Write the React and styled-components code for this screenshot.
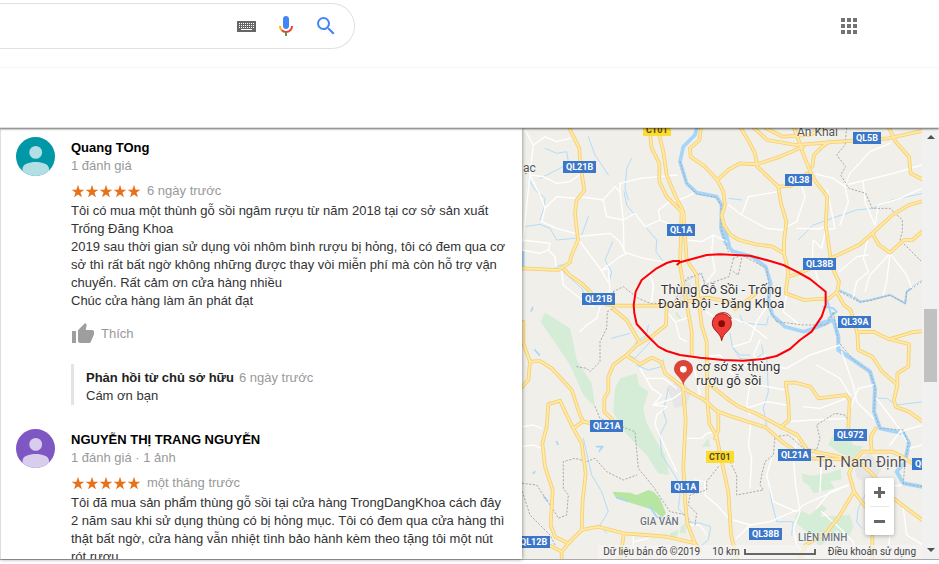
import React from "react";
import styled, { createGlobalStyle } from "styled-components";

const user = {
  teal: { back: "#0097a7", front: "#b2dfe4" },
  purple: { back: "#7e57c2", front: "#d8cdec" },
};

const reviews = [
  {
    name: "Quang TOng",
    info: "1 đánh giá",
    time: "6 ngày trước",
    avatar: user.teal,
    text: [
      "Tôi có mua một thùnh gỗ sồi ngâm rượu từ năm 2018 tại cơ sở sản xuất Trống Đăng Khoa",
      "2019 sau thời gian sử dụng vòi nhôm bình rượu bị hỏng, tôi có đem qua cơ sở thì rất bất ngờ không những được thay vòi miễn phí mà còn hỗ trợ vận chuyển. Rất cảm ơn cửa hàng nhiều",
      "Chúc cửa hàng làm ăn phát đạt",
    ],
    reply: { time: "6 ngày trước", text: "Cám ơn bạn" },
  },
  {
    name: "NGUYỄN THỊ TRANG NGUYỄN",
    info: "1 đánh giá · 1 ảnh",
    time: "một tháng trước",
    avatar: user.purple,
    text: [
      "Tôi đã mua sản phẩm thùng gỗ sồi tại cửa hàng TrongDangKhoa cách đây 2 năm sau khi sử dụng thùng có bị hỏng mục. Tôi có đem qua cửa hàng thì thật bất ngờ, cửa hàng vẫn nhiệt tình bảo hành kèm theo tặng tôi một nút rót rượu",
    ],
  },
];

const shields = [
  { text: "CT01", x: 121, y: -4, toll: true },
  { text: "QL5B", x: 331, y: 4 },
  { text: "QL21B", x: 41, y: 33 },
  { text: "QL38", x: 263, y: 46 },
  { text: "QL1A", x: 145, y: 96 },
  { text: "QL38B", x: 281, y: 130 },
  { text: "QL21B", x: 60, y: 165 },
  { text: "QL39A", x: 316, y: 188 },
  { text: "QL21A", x: 68, y: 292 },
  { text: "QL972", x: 312, y: 301 },
  { text: "QL21A", x: 256, y: 321 },
  { text: "CT01", x: 184, y: 323, toll: true },
  { text: "QL1A", x: 149, y: 353 },
  { text: "QL12B", x: -5, y: 408 },
  { text: "QL38B", x: 227, y: 400 },
  { text: "QL10", x: 390, y: 330 },
];

const roads = [
  "M7 430L115 435L150 412L153 395L174 345L165 265L170 225L193 197L180 110L178 70L148 9",
  "M132 432L148 450L185 475L210 500L225 520L262 540L300 542L420 542L500 530L560 518L630 530",
  "M280 552L320 585L340 620L360 655",
  "M388 9L395 70L418 115L418 170L440 215L485 260L483 330L480 420L490 480L515 620L515 690",
  "M413 9L430 80L440 150L465 210L490 260L495 330L500 405L530 450L535 520L545 600L560 650L562 830L568 895L590 935L600 985L625 1100L633 1230L650 1300",
  "M488 780L497 885L490 1025L495 1125L502 1195L525 1255",
  "M543 9L538 45L510 70L512 95L555 125L592 165L610 200L615 240L605 270L612 300L630 328L657 345L707 358L757 365L792 385",
  "M592 165L627 133L660 115L710 118L780 95L850 65",
  "M662 9L687 50L705 85L712 125L775 185L782 230L799 290L792 350L792 385L805 440L797 505L852 525L927 520L952 500L957 470L942 440L932 400L917 300L922 215L887 170L867 130L847 80L832 35L822 9",
  "M702 9L742 45L827 60L957 50L1107 40L1205 18",
  "M737 9L787 35L867 30L917 9",
  "M1107 9L1127 50L1167 95L1172 145L1209 164",
  "M775 185L812 183L862 145",
  "M877 125L882 90L907 65L927 50",
  "M1209 228L1167 240L1117 270L1057 325L1017 360L937 398L850 440L805 455",
  "M1057 325L1077 360L1110 383L1152 345L1177 345L1209 318",
  "M952 505L972 540L992 555L1012 625L1015 675L1057 695L1087 740L1132 780L1122 825L1127 845L1167 860L1209 890",
  "M1012 622L1060 620L1107 643L1177 622L1209 618",
  "M1117 645L1167 657L1165 725L1132 745L1132 785",
  "M565 775L627 825L657 845L707 865L782 905L832 930L862 975L957 995L1017 1010",
  "M488 790L550 823L590 858L630 873L737 907L792 955L857 1000L970 1003",
  "M595 860L595 915L585 940",
  "M782 907L807 885L805 830L797 773L827 773L872 785L895 820L977 810L989 825L985 910",
  "M1067 910L1052 935L1055 980",
  "M970 1003L1005 1005L1027 980L1117 980L1147 995L1177 1015",
  "M1002 1010L987 1045L1002 1100L1040 1150",
  "M1002 1100L957 1175L917 1225L857 1260L837 1302",
  "M1017 1010L1055 1045L1107 1110L1209 1187",
  "M1057 1235L1057 1302",
  "M10 590L10 655L30 710L25 765L7 785",
  "M30 710L60 708L95 730L155 795L180 870L190 890L215 895",
  "M190 888L160 910L140 870L120 827L85 838L80 905L67 955L75 1025L98 1095L92 1200L105 1235L145 1255L185 1215L188 1125L197 1045L185 955L160 910",
  "M90 1262L125 1280L150 1250M125 1280L125 1302",
  "M185 1215L235 1205L310 1225L440 1235L525 1255L540 1275M312 1225L300 1302",
  "M440 550L438 600L395 635L350 660L320 690L280 720L265 755L265 800L253 820L253 860L278 885",
  "M320 692L360 718L395 698L425 712L435 745L488 785",
  "M645 552L690 520L707 505",
];

const lanes = [
  "M15 15L40 60L30 150L20 240L12 320L7 350",
  "M30 150L70 155L110 175L150 170L178 150M30 150L60 210L75 250L65 290L110 310L165 325",
  "M40 60L75 35L110 50L150 40M75 250L110 215L170 220",
  "M178 215L250 225L260 275L310 285L300 200L285 185L250 225M300 200L300 175L360 160L418 155L470 150",
  "M174 335L270 325L300 350L315 382L370 400L440 412M310 285L312 380",
  "M310 285L345 265L375 305L420 285L455 300L483 310M420 285L415 255L450 230L490 220L520 205",
  "M7 345L90 355L85 375L105 395L108 425M7 375L60 385L85 375M180 350L240 430L270 480L265 535",
  "M125 440L130 480L180 520L220 545M245 435L300 395L320 385M268 470L265 430L245 435",
  "M240 545L230 580L200 600L180 620M385 435L400 480L395 535",
  "M500 345L545 350L580 330L620 350M580 330L575 380L585 440L560 470",
  "M440 560L465 590L480 640L500 650M470 590L510 575M560 560L600 590L640 580L690 600L740 640",
  "M627 240L665 270L740 310L790 315M665 270L685 215L775 200M880 145L940 160L975 185",
  "M790 310L830 290L855 215L840 165M830 310L900 312L920 300L905 370L880 345L877 400L900 490",
  "M922 195L945 310L917 315M977 180L1120 145L1205 120M975 180L990 145L1050 80L1110 55",
  "M975 185L985 230L960 300M1030 170L1035 230L1065 300L1075 240L1140 220L1205 190",
  "M1045 335L1030 400L1045 440L1010 470L1000 515M1110 385L1160 450L1175 490L1205 470",
  "M1110 385L1100 470L1090 510M1110 385L1050 450L1035 500M957 440L1010 395L1045 390",
  "M740 545L710 590L690 650L640 665M800 510L790 560L840 600",
  "M510 700L600 690L620 715L690 720L740 690M627 740L690 775L680 840L690 870",
  "M680 850L740 830L800 840M690 775L795 795M720 645L700 690L730 720L800 730L870 690L960 660",
  "M965 680L1000 780L1010 830L1060 880M890 720L960 760L990 810M800 890L880 885L985 880",
  "M850 845L900 850L980 820M832 930L820 1000L827 1080L840 1160",
  "M360 730L395 790L425 810L400 840L440 845L410 870L405 900L470 1040",
  "M380 760L430 760L470 790M400 840L460 820L488 800M500 700L525 740L540 810L500 800",
  "M500 940L545 940L560 925L590 920M7 905L40 900L65 910M7 965L40 960L65 970M525 1065L555 1070L555 1110L590 1140L627 1180",
  "M692 900L685 960L695 1000L690 1090M755 1000L740 1050L760 1130L830 1160L850 1140L985 1080",
  "M640 1185L690 1200L750 1190L830 1155M690 1200L650 1240M840 1160L820 1210L830 1260L870 1302",
  "M985 1080L930 1100L890 1150M900 1100L905 1000M905 1160L960 1210L1000 1250L1020 1302",
  "M500 1200L540 1200L560 1230M340 1235L340 1302M345 1250L385 1240",
  "M1060 780L1015 790L980 880M1070 820L1130 900L1160 950M1145 1080L1110 1085M1110 960L1140 920L1209 900",
  "M1110 1110L1090 1165L1110 1230L1100 1302M1150 1150L1160 1230L1209 1260",
  "M1205 960L1170 970M1040 1080L1070 1120L1120 1120",
];

const streams = [
  "M28 165L45 195L75 220L72 250L60 285M75 70L110 85L140 80L145 110L120 130L60 160",
  "M12 305L60 298L90 310L110 345L165 340M145 420L120 420L90 440M130 440L185 490L200 520",
  "M312 200L320 240L345 270M335 100L320 130L315 190L325 225M225 90L265 150M205 35L225 90M185 330L205 275",
  "M380 310L410 345L408 380L430 410M278 350L255 405L275 440L268 470",
  "M495 470L540 445L555 470L540 500L490 510M345 655L380 630L385 600",
  "M190 940L215 1050L245 1100L265 1160L240 1200L260 1225",
  "M445 790L430 860L440 890L420 930L425 990L470 1060L480 1110L475 1150L500 1180",
  "M500 1190L540 1195L572 1205L565 1245L540 1265L520 1250",
  "M627 220L665 225M835 345L880 300L950 275L1010 255L1060 250L1115 225L1209 205",
  "M630 625L637 665L660 690L690 690M660 570L670 595L740 600L745 575M740 690L745 800L730 850L740 900",
  "M640 670L660 700L700 705L730 685L725 660M1067 820L1100 820L1130 840L1209 830",
  "M750 1095L755 1130L770 1190L820 1190L815 1230M1067 1080L1040 1100L1015 1150L1010 1190L1025 1210",
  "M325 690L345 700L400 640M275 640L330 625M352 722L385 735L425 725L430 705",
];

const borders = [
  "M480 110L500 175L530 207L590 217L603 240L603 310L625 380",
  "M980 9L975 60L950 90L977 125L962 150L987 190L1037 205L1057 250L1110 250L1147 285L1147 320L1140 345L1205 410",
  "M280 500L310 485L355 520L390 535L460 535L500 460L545 445L555 480L627 455L640 400",
  "M280 500L280 550L262 560L260 610L240 650L240 710L210 740L200 730L170 725",
  "M640 400L665 390L740 430L750 500L740 540L770 590M665 400L655 450L640 440",
  "M770 590L850 600L920 600L940 560L955 650L1000 705L1050 740L1065 790L1062 860L1080 910L1150 915L1165 955L1155 1010L1150 1075L1205 1085",
  "M225 845L240 880L345 920L355 1030L400 1085L450 1160L500 1170L510 1190",
  "M7 1075L50 1080L110 1170L115 1180L140 1170L145 1110L130 1090L130 1010L165 1000L200 1010L225 1000L260 1040L310 1065L350 1050",
  "M7 1100L30 1170L90 1230L105 1260M595 1025L560 1070L560 1095L510 1110L505 1140L530 1165L525 1200",
  "M980 880L975 870L945 865L890 900L900 940L890 975L850 970L805 930L765 935L760 990L735 1010L725 1050L720 1080L730 1095L650 1110L650 1050L630 1010",
  "M922 520L960 500L1020 532L1050 527L1110 510L1157 535L1160 500L1205 470",
];

const greens = [
  "M62 590L75 563L100 578L150 610L158 645L170 705L215 775L225 845L190 810L150 720L110 660Z",
  "M285 790L300 760L350 745L357 780L385 800L370 850L378 890L410 950L435 990L447 1050L415 1045L380 990L350 960L300 905L280 860Z",
  "M845 1045L870 1052L925 1045L962 1032L965 1062L930 1070L945 1090L880 1105L870 1085L850 1070Z",
  "M827 1170L840 1155L870 1170L905 1138L920 1150L900 1175L990 1170L1000 1205L985 1240L950 1215L900 1265L870 1230L825 1190Z",
  "M925 960L945 920L985 935L1000 960L1030 965L1000 1000L960 985Z",
  "M470 560L487 585L475 580L465 565ZM545 965L565 940L572 965ZM482 1205L497 1195L497 1225L480 1225ZM450 1225L475 1215L470 1240L450 1240Z",
];

const Star = () => (
  <svg width="14" height="14" viewBox="1 1 22 22" aria-hidden="true">
    <path
      fill="#e7711b"
      d="M12 17.6L18.2 22L15.9 14.5L22 10H14.5L12 2L9.5 10H2L8.1 14.5L5.8 22Z"
    />
  </svg>
);

const AvatarIcon = ({ colors }) => (
  <Avatar viewBox="0 0 39 39" role="img" aria-label="Avatar">
    <defs>
      <clipPath id={"clip" + colors.back.slice(1)}>
        <circle cx="19.5" cy="19.5" r="19.5" />
      </clipPath>
    </defs>
    <g clipPath={`url(#clip${colors.back.slice(1)})`}>
      <rect width="39" height="39" fill={colors.back} />
      <circle cx="19.7" cy="15.4" r="6.4" fill={colors.front} />
      <path
        fill={colors.front}
        d="M6.5 32C6.5 27 13 25 19.7 25S33 27 33 32V40H6.5Z"
      />
    </g>
  </Avatar>
);

const Review = ({ data }) => (
  <ReviewRow>
    <AvatarIcon colors={data.avatar} />
    <ReviewBody>
      <Name>{data.name}</Name>
      <Muted>{data.info}</Muted>
      <Rating>
        <Stars role="img" aria-label="5/5">
          {[1, 2, 3, 4, 5].map((n) => (
            <Star key={n} />
          ))}
        </Stars>
        <Muted>{data.time}</Muted>
      </Rating>
      {data.text.map((line) => (
        <Paragraph key={line}>{line}</Paragraph>
      ))}
      <LikeButton type="button">
        <svg width="24" height="24" viewBox="0 0 24 24" aria-hidden="true">
          <path
            fill="#9e9e9e"
            d="M1 21h4V9H1v12zm22-11c0-1.1-.9-2-2-2h-6.31l.95-4.57.03-.32c0-.41-.17-.79-.44-1.06L14.17 1 7.59 7.59C7.22 7.95 7 8.45 7 9v10c0 1.1.9 2 2 2h9c.83 0 1.54-.5 1.84-1.22l3.02-7.05c.09-.23.14-.47.14-.73v-2z"
          />
        </svg>
        Thích
      </LikeButton>
      {data.reply && (
        <Reply>
          <ReplyHead>
            <b>Phản hồi từ chủ sở hữu</b>
            <Muted>{data.reply.time}</Muted>
          </ReplyHead>
          <Paragraph>{data.reply.text}</Paragraph>
        </Reply>
      )}
    </ReviewBody>
  </ReviewRow>
);

// drawn on a grid three times finer than the page
const MapDrawing = () => (
  <MapSvg viewBox="6 9 1203 1293" preserveAspectRatio="xMinYMin slice">
    <g fill="#d5ecd7">
      {greens.map((d) => (
        <path key={d} d={d} />
      ))}
    </g>
    <path
      fill="#b7e6a3"
      d="M278 1100L330 1103L350 1110L385 1095L400 1100L420 1120L438 1165L425 1178L400 1155L370 1145L320 1130L285 1115Z"
    />
    <path
      fill="#e6e6e6"
      d="M440 785L470 772L500 780L515 800L500 840L465 850ZM1000 1010L1050 985L1085 1030L1060 1080L1010 1060ZM470 480L510 470L520 520L480 530Z"
    />
    <g fill="none" strokeLinejoin="round" strokeLinecap="round">
      <g stroke="#b3dcfa" strokeWidth="3">
        {streams.map((d) => (
          <path key={d} d={d} />
        ))}
      </g>
      <g stroke="#a6d5fa">
        <path
          strokeWidth="11"
          d="M530 9L525 30L490 65L480 110L500 175L530 203L590 215L605 240L603 310L615 350L637 378L697 395L737 425L752 475L745 525L757 570L795 605L852 620L900 603L937 585"
        />
        <path
          strokeWidth="12"
          d="M900 595L940 585L955 635L955 675L1000 705L1050 740L1065 790L1062 860L1080 910L1150 925L1167 955L1155 1010L1130 1040L1150 1075L1209 1086"
        />
        <path
          strokeWidth="6"
          d="M922 520L960 497L1000 515L1020 530L1050 525L1110 510L1155 535L1160 500L1205 468M922 525L937 585M910 545L940 550L950 560L925 580"
        />
        <path strokeWidth="12" d="M607 290L627 360M7 380L7 425" />
        <path
          strokeWidth="5"
          d="M38 548L34 558M45 675L58 690M110 950L114 958M230 965L248 965L238 978M40 1045L44 1040M72 1115L82 1128M290 1118L320 1128M390 1145L410 1175L430 1182"
        />
      </g>
      <g stroke="#fff" strokeWidth="4">
        {lanes.map((d) => (
          <path key={d} d={d} />
        ))}
      </g>
      <g stroke="#a9a9a9" strokeWidth="3" strokeDasharray="4 7">
        {borders.map((d) => (
          <path key={d} d={d} />
        ))}
      </g>
      <g stroke="#f5cf72" strokeWidth="11">
        {roads.map((d) => (
          <path key={d} d={d} />
        ))}
      </g>
      <g stroke="#ffe9a4" strokeWidth="6">
        {roads.map((d) => (
          <path key={d} d={d} />
        ))}
      </g>
    </g>
  </MapSvg>
);

const MapMarks = () => (
  <MapSvg viewBox="6 9 1203 1293" preserveAspectRatio="xMinYMin slice">
    <path
      fill="none"
      stroke="#fb0007"
      strokeWidth="6"
      strokeLinejoin="round"
      d="M470 420L480 412L530 398L560 390L600 388L690 392L750 408L790 420L830 440L870 462L895 482L917 500L917 540L905 575L875 620L840 645L810 672L770 693L730 702L670 707L610 705L540 698L480 690L440 678L415 665L380 630L350 597L343 565L341 540L347 500L365 465L410 430L440 414L460 408L480 408"
    />
    <path
      fill="#dc4437"
      d="M490 782C486 758 462 750 462 733C462 717 474 705 490 705S519 717 519 733C519 750 494 758 490 782Z"
    />
    <circle cx="490" cy="733" r="10" fill="#fff" />
    <path
      fill="#ef3c36"
      stroke="#a31616"
      strokeWidth="3"
      d="M605 647C602 622 577 617 577 595C577 578 590 566 606 566S634 578 634 596C634 617 609 622 605 647Z"
    />
    <path fill="none" stroke="#b3201c" strokeWidth="3" d="M585 574C598 558 630 558 634 582" />
    <circle cx="605" cy="596" r="10" fill="#8a0a0a" />
  </MapSvg>
);

function App() {
  return (
    <Page>
      <GlobalStyle />
      <Header>
        <TopBar>
          <SearchBox role="search">
            <SearchInput type="text" aria-label="Tìm kiếm" />
            <IconButton type="button" aria-label="Bàn phím">
              <svg width="19" height="11" viewBox="0 0 19 11">
                <rect width="19" height="11" fill="#666" />
                <path
                  stroke="#fff"
                  strokeDasharray="1 1"
                  d="M2 2.5H17M2 4.5H17M2 6.5H17"
                />
                <path stroke="#fff" d="M4 8.5H15" />
              </svg>
            </IconButton>
            <IconButton type="button" aria-label="Giọng nói">
              <svg width="24" height="24" viewBox="0 0 24 24">
                <path fill="#4285f4" d="M12 15c1.7 0 3-1.3 3-3V5c0-1.700-1.300-3-3-3S9 3.300 9 5v7c0 1.700 1.300 3 3 3z" />
                <path fill="#34a853" d="M11 18.900h2V22h-2z" />
                <path fill="#fbbc05" d="M7 12H5c0 1.900.8 3.700 2 5l1.400-1.400C7.600 14.700 7 13.400 7 12z" />
                <path fill="#ea4335" d="M12 17c-1.400 0-2.600-.6-3.500-1.500L7.100 17c1.200 1.200 3 2 4.900 2 3.900 0 7-3.100 7-7h-2c0 2.800-2.200 5-5 5z" />
              </svg>
            </IconButton>
            <IconButton type="submit" aria-label="Tìm">
              <svg width="24" height="24" viewBox="0 0 24 24">
                <path
                  fill="#4285f4"
                  d="M15.500 14h-.79l-.28-.27A6.470 6.470 0 0 0 16 9.500 6.500 6.500 0 1 0 9.500 16c1.610 0 3.090-.59 4.230-1.570l.27.28v.79l5 4.990L20.490 19l-4.990-5zm-6 0C7.010 14 5 11.990 5 9.500S7.010 5 9.500 5 14 7.010 14 9.500 11.990 14 9.500 14z"
                />
              </svg>
            </IconButton>
          </SearchBox>
          <IconButton type="button" aria-label="Ứng dụng">
            <svg width="16" height="16" viewBox="0 0 16 16" fill="#737373">
              <path d="M0 0h4v4H0zM6 0h4v4H6zM12 0h4v4h-4zM0 6h4v4H0zM6 6h4v4H6zM12 6h4v4h-4zM0 12h4v4H0zM6 12h4v4H6zM12 12h4v4h-4z" />
            </svg>
          </IconButton>
        </TopBar>
      </Header>
      <Content>
        <Reviews>
          {reviews.map((data) => (
            <Review key={data.name} data={data} />
          ))}
        </Reviews>
        <MapArea>
          <MapDrawing />
          {shields.map((s, index) => (
            <Shield key={index} $x={s.x} $y={s.y} $toll={s.toll}>
              {s.text}
            </Shield>
          ))}
          <Place $x={1} $y={32} $size={12}>ạc</Place>
          <Place $x={275} $y={-4} $size={12}>An Khái</Place>
          <Place $x={118} $y={386} $size={10} $area>GIA VÂN</Place>
          <Place $x={276} $y={402} $size={10} $area>LIÊN MINH</Place>
          <Place $x={294} $y={326} $size={15}>Tp. Nam Định</Place>
          <Place $x={136} $y={155} $size={13} $dark>
            Thùng Gỗ Sồi - Trống
            <br />
            Đoàn Đội - Đăng Khoa
          </Place>
          <Place $x={174} $y={232} $size={13} $dark $left>
            cơ sở sx thùng
            <br />
            rượu gỗ sồi
          </Place>
          <MapMarks />
          <ZoomBox>
            <ZoomButton type="button" aria-label="Phóng to">
              <svg width="11" height="11" viewBox="0 0 11 11">
                <path fill="#666" d="M4 0h3v4h4v3H7v4H4V7H0V4h4z" />
              </svg>
            </ZoomButton>
            <ZoomLine />
            <ZoomButton type="button" aria-label="Thu nhỏ">
              <svg width="11" height="11" viewBox="0 0 11 11">
                <path fill="#666" d="M0 4h11v3H0z" />
              </svg>
            </ZoomButton>
          </ZoomBox>
          <MapFooter>
            <span>Dữ liệu bản đồ ©2019</span>
            <Scale>
              10 km
              <ScaleBar />
            </Scale>
            <a href="#terms">Điều khoản sử dụng</a>
          </MapFooter>
        </MapArea>
        <ScrollBar>
          <ScrollButton type="button" aria-label="Cuộn lên">
            <svg width="8" height="4" viewBox="0 0 8 4">
              <path fill="#505050" d="M4 0L8 4H0z" />
            </svg>
          </ScrollButton>
          <ScrollTrack>
            <ScrollThumb />
          </ScrollTrack>
          <ScrollButton type="button" aria-label="Cuộn xuống">
            <svg width="8" height="4" viewBox="0 0 8 4">
              <path fill="#505050" d="M0 0h8L4 4z" />
            </svg>
          </ScrollButton>
        </ScrollBar>
      </Content>
    </Page>
  );
}

export default App;

const GlobalStyle = createGlobalStyle`
  * {
    box-sizing: border-box;
  }
  body {
    margin: 0;
    background: #fff;
    font-family: "Liberation Sans", Arial, sans-serif;
    font-size: 13px;
    line-height: 18px;
    color: #333;
  }
  button {
    font: inherit;
    color: inherit;
    border: none;
    background: none;
    padding: 0;
    cursor: pointer;
  }
  p {
    margin: 0;
  }
`;
const Page = styled.div`
  display: grid;
  grid-template-rows: 128px minmax(0, 1fr);
  height: 100vh;
  padding-bottom: 4px;
`;
const Header = styled.header`
  position: relative;
  z-index: 2;
  background: #fff;
  border-bottom: 1px solid #ddd;
  box-shadow: 0 1px 2px rgba(0, 0, 0, 0.6);
`;
const TopBar = styled.div`
  display: flex;
  justify-content: space-between;
  align-items: flex-start;
  height: 68px;
  padding: 3px 78px 0 0;
  border-bottom: 1px solid #f6f6f6;
`;
const SearchBox = styled.form`
  display: flex;
  align-items: center;
  width: 355px;
  height: 46px;
  padding-right: 16px;
  border: 1px solid #dfe1e5;
  border-left: none;
  border-radius: 0 24px 24px 0;
`;
const SearchInput = styled.input`
  flex: 1;
  min-width: 0;
  border: none;
  outline: none;
  font: inherit;
`;
const IconButton = styled.button`
  display: flex;
  align-items: center;
  justify-content: center;
  min-width: 24px;
  height: 46px;
  margin-left: 16px;
`;
const Content = styled.main`
  display: flex;
  min-height: 0;
  border-bottom: 1px solid #aaa;
`;
const Reviews = styled.section`
  position: relative;
  z-index: 1;
  flex: 0 0 522px;
  overflow: hidden;
  padding-top: 9px;
  background: #fff;
  border-left: 1px solid #dcdce4;
  box-shadow: 0 0 4px rgba(0, 0, 0, 0.5);
`;
const ReviewRow = styled.article`
  display: flex;
  gap: 16px;
  padding: 0 12px 24px 15px;
`;
const Avatar = styled.svg`
  flex: none;
  width: 39px;
  height: 39px;
`;
const ReviewBody = styled.div`
  flex: 1;
  padding-top: 2px;
`;
const Name = styled.div`
  font-weight: 700;
  color: #000;
`;
const Muted = styled.div`
  color: #999;
`;
const Rating = styled.div`
  display: flex;
  align-items: center;
  gap: 6px;
  margin: 7px 0 2px;
`;
const Stars = styled.div`
  display: flex;
`;
const Paragraph = styled.p`
  color: #333;
`;
const LikeButton = styled.button`
  display: flex;
  align-items: center;
  gap: 6px;
  margin: 12px 0 18px;
  color: #999;
`;
const Reply = styled.div`
  border-left: 3px solid #e4e4e4;
  padding: 5px 0 0 12px;
`;
const ReplyHead = styled.div`
  display: flex;
  gap: 5px;

  b {
    font-weight: 700;
    color: #222;
  }
`;
const MapArea = styled.section`
  position: relative;
  flex: 1;
  min-width: 0;
  overflow: hidden;
  background: #f0efea;
  font-family: Roboto, "Liberation Sans", sans-serif;
`;
const MapSvg = styled.svg`
  position: absolute;
  inset: 0;
  width: 100%;
  height: 100%;
`;
const Shield = styled.span`
  position: absolute;
  left: ${(props) => props.$x}px;
  top: ${(props) => props.$y}px;
  padding: 0 3px;
  background: ${(props) => (props.$toll ? "#fddc32" : "#3a76c9")};
  color: ${(props) => (props.$toll ? "#5a4a10" : "#fff")};
  font-size: 9px;
  font-weight: 700;
  line-height: 12px;
`;
const Place = styled.span`
  position: absolute;
  left: ${(props) => props.$x}px;
  top: ${(props) => props.$y}px;
  white-space: nowrap;
  text-align: ${(props) => (props.$left ? "left" : "center")};
  font-size: ${(props) => props.$size}px;
  font-weight: ${(props) => (props.$area ? 500 : 400)};
  line-height: ${(props) => (props.$dark ? 14 : 16)}px;
  color: ${(props) => (props.$dark ? "#333" : props.$area ? "#6b7580" : "#555")};
  text-shadow: 0 0 2px #fff, 0 0 2px #fff;
`;
const ZoomBox = styled.div`
  position: absolute;
  right: 28px;
  bottom: 24px;
  width: 29px;
  background: #fff;
  border-radius: 2px;
  box-shadow: 0 1px 4px rgba(0, 0, 0, 0.3);
`;
const ZoomButton = styled.button`
  display: flex;
  align-items: center;
  justify-content: center;
  width: 100%;
  height: 28px;
`;
const ZoomLine = styled.div`
  height: 1px;
  margin: 0 5px;
  background: #e6e6e6;
`;
const MapFooter = styled.footer`
  position: absolute;
  right: 0;
  bottom: 0;
  display: flex;
  gap: 12px;
  padding: 0 6px 0 5px;
  background: rgba(245, 245, 245, 0.7);
  color: #444;
  font-size: 10px;
  line-height: 14px;
  white-space: nowrap;

  a {
    color: inherit;
    text-decoration: none;
  }
`;
const Scale = styled.span`
  display: flex;
  align-items: center;
  gap: 4px;
`;
const ScaleBar = styled.span`
  width: 72px;
  height: 6px;
  border: 2px solid #666;
  border-top: none;
`;
const ScrollBar = styled.div`
  display: flex;
  flex-direction: column;
  width: 17px;
  padding: 0 2px;
  background: #f1f1f1;
`;
const ScrollButton = styled.button`
  display: flex;
  align-items: center;
  justify-content: center;
  height: 18px;
`;
const ScrollTrack = styled.div`
  flex: 1;
  padding-top: 163px;
`;
const ScrollThumb = styled.div`
  height: 73px;
  background: #c1c1c1;
`;
